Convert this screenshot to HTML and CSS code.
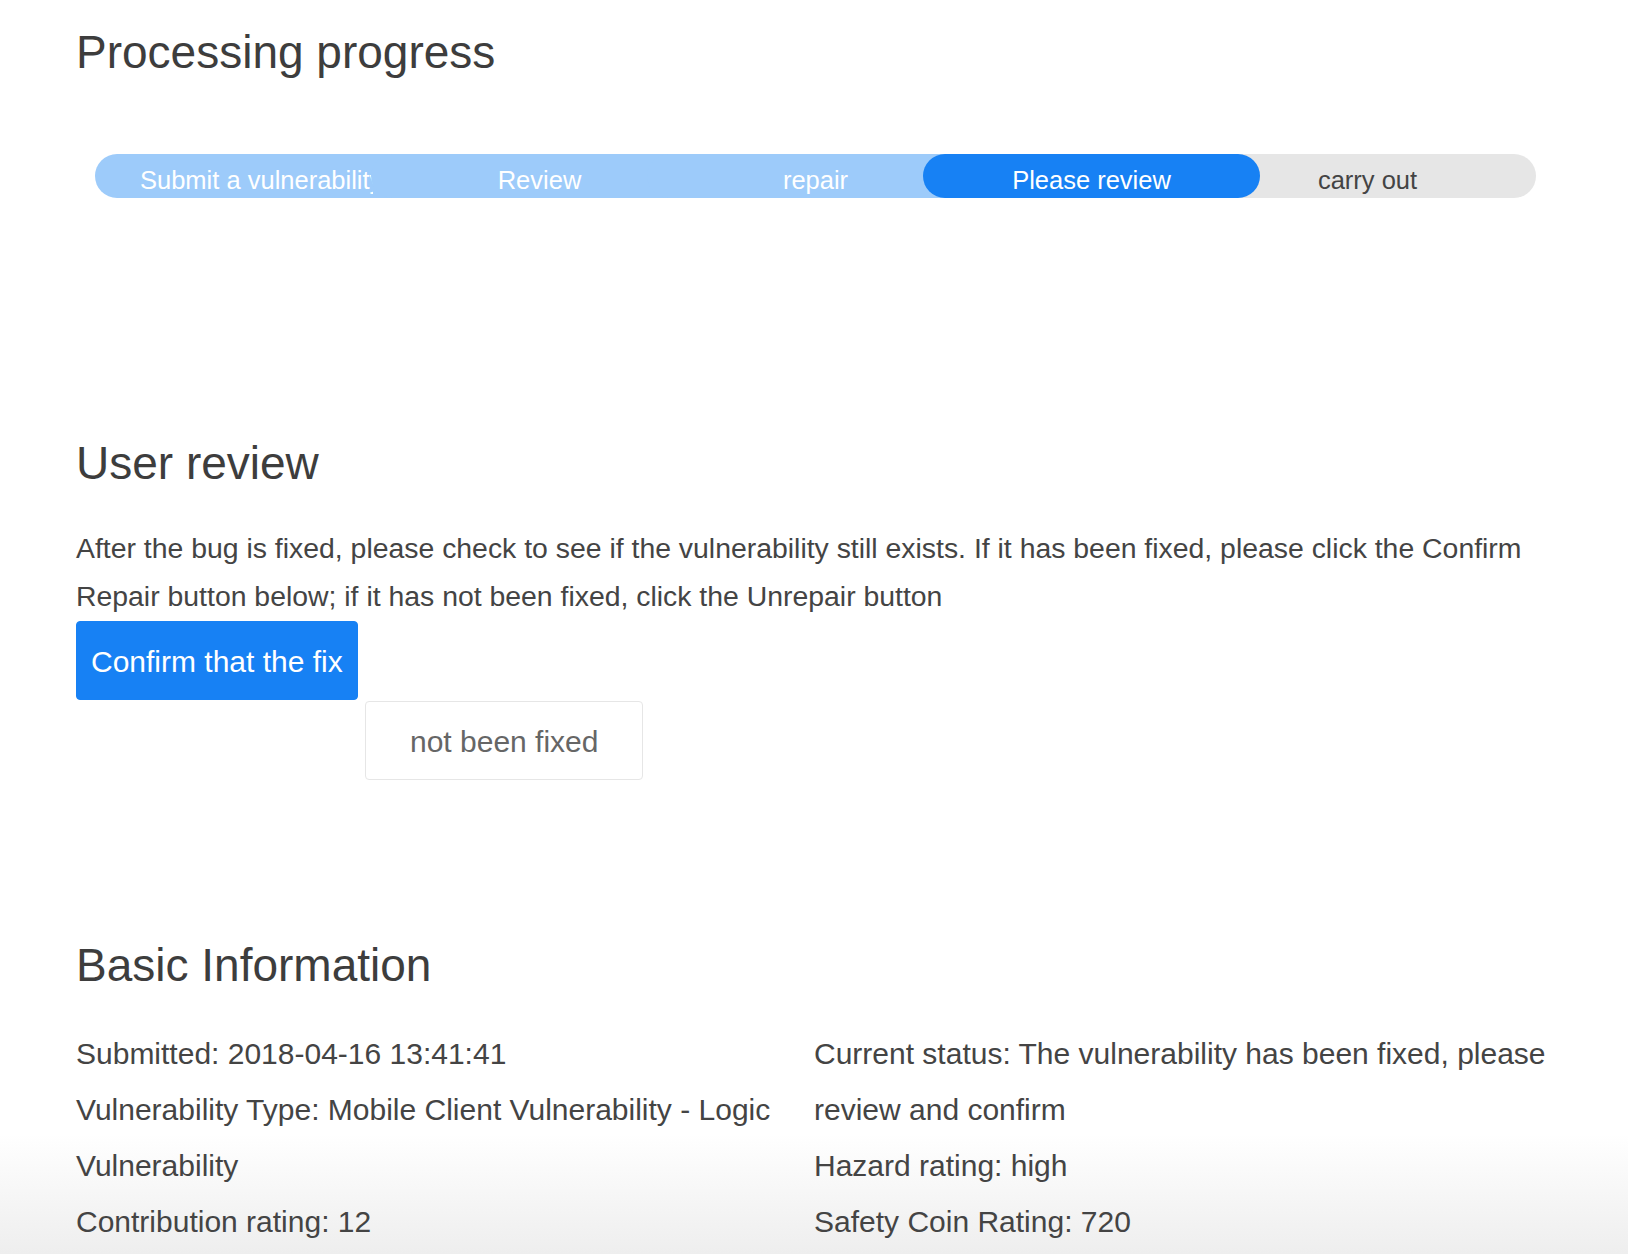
FILE: index.html
```
<!DOCTYPE html>
<html lang="en">
<head>
<meta charset="utf-8">
<title>Processing progress</title>
<link rel="stylesheet" href="styles.css">
</head>
<body>
<div class="page">
  <h2 class="title">Processing progress</h2>
  <ol class="steps">
    <li class="step done"><span class="step-label step-label-clip">Submit a vulnerability</span></li>
    <li class="step done"><span class="step-label">Review</span></li>
    <li class="step done"><span class="step-label">repair</span></li>
    <li class="step active"><span class="step-label">Please review</span></li>
    <li class="step todo"><span class="step-label">carry out</span></li>
  </ol>

  <h2 class="title title-review">User review</h2>
  <p class="desc">After the bug is fixed, please check to see if the vulnerability still exists. If it has been fixed, please click the Confirm Repair button below; if it has not been fixed, click the Unrepair button</p>
  <div class="actions">
    <button class="btn btn-primary" type="button">Confirm that the fix</button>
    <button class="btn btn-default" type="button">not been fixed</button>
  </div>

  <h2 class="title title-info">Basic Information</h2>
  <div class="info">
    <ul class="info-col">
      <li>Submitted: 2018-04-16 13:41:41</li>
      <li>Vulnerability Type: Mobile Client Vulnerability - Logic Vulnerability</li>
      <li>Contribution rating: 12</li>
    </ul>
    <ul class="info-col">
      <li>Current status: The vulnerability has been fixed, please review and confirm</li>
      <li>Hazard rating: high</li>
      <li>Safety Coin Rating: 720</li>
    </ul>
  </div>
</div>
</body>
</html>
```
FILE: styles.css
```
html {
  margin: 0;
  padding: 0;
  background: #ffffff linear-gradient(to bottom, rgba(239, 239, 239, 0), #eeeeee) no-repeat left bottom / 100% 120px fixed;
}

body {
  margin: 0;
  padding: 0;
  font-family: "Liberation Sans", Helvetica, Arial, sans-serif;
  color: #444444;
}

.page {
  padding: 24px 76px 0;
}

.title {
  margin: 0;
  font-size: 46px;
  line-height: 56px;
  font-weight: normal;
  color: #3d3d3d;
}

.steps {
  display: flex;
  margin: 74px 0 0;
  padding: 0;
  list-style: none;
}

.step {
  position: relative;
  flex: 0 0 337px;
  height: 44px;
  margin-left: -61px;
  border-radius: 22px;
  display: flex;
  align-items: center;
  justify-content: center;
  font-size: 25.5px;
  line-height: 43px;
}

.step:first-child {
  margin-left: 19px;
}

.step.done {
  background: #9dcbfa;
  color: #ffffff;
}

.step.active {
  background: #1781f4;
  color: #ffffff;
  z-index: 1;
}

.step.todo {
  background: #e6e6e6;
  color: #444444;
}

.step-label {
  white-space: nowrap;
  padding-top: 9px;
}

.step-label-clip {
  display: block;
  width: 233px;
  overflow: hidden;
  margin-right: 14px;
}

.title-review {
  margin-top: 237px;
}

.desc {
  margin: 33px 0 0;
  font-size: 28.4px;
  line-height: 48px;
  color: #444444;
}

.actions {
  display: flex;
  flex-direction: column;
  align-items: flex-start;
  margin-top: 1px;
}

.btn {
  height: 79px;
  font-family: inherit;
  font-size: 30px;
  border-radius: 4px;
  cursor: pointer;
}

.btn-primary {
  padding: 2px 14px 0;
  background: #1781f4;
  border: 1px solid #1781f4;
  color: #ffffff;
}

.btn-default {
  margin-top: 1px;
  margin-left: 289px;
  padding: 2px 44px 0;
  background: #ffffff;
  border: 1px solid #e6e6e6;
  color: #666666;
}

.title-info {
  margin-top: 157px;
}

.info {
  display: grid;
  grid-template-columns: 1fr 1fr;
  margin-top: 33px;
}

.info-col {
  margin: 0;
  padding: 0;
  list-style: none;
  font-size: 30px;
  line-height: 56px;
  color: #444444;
}
```
